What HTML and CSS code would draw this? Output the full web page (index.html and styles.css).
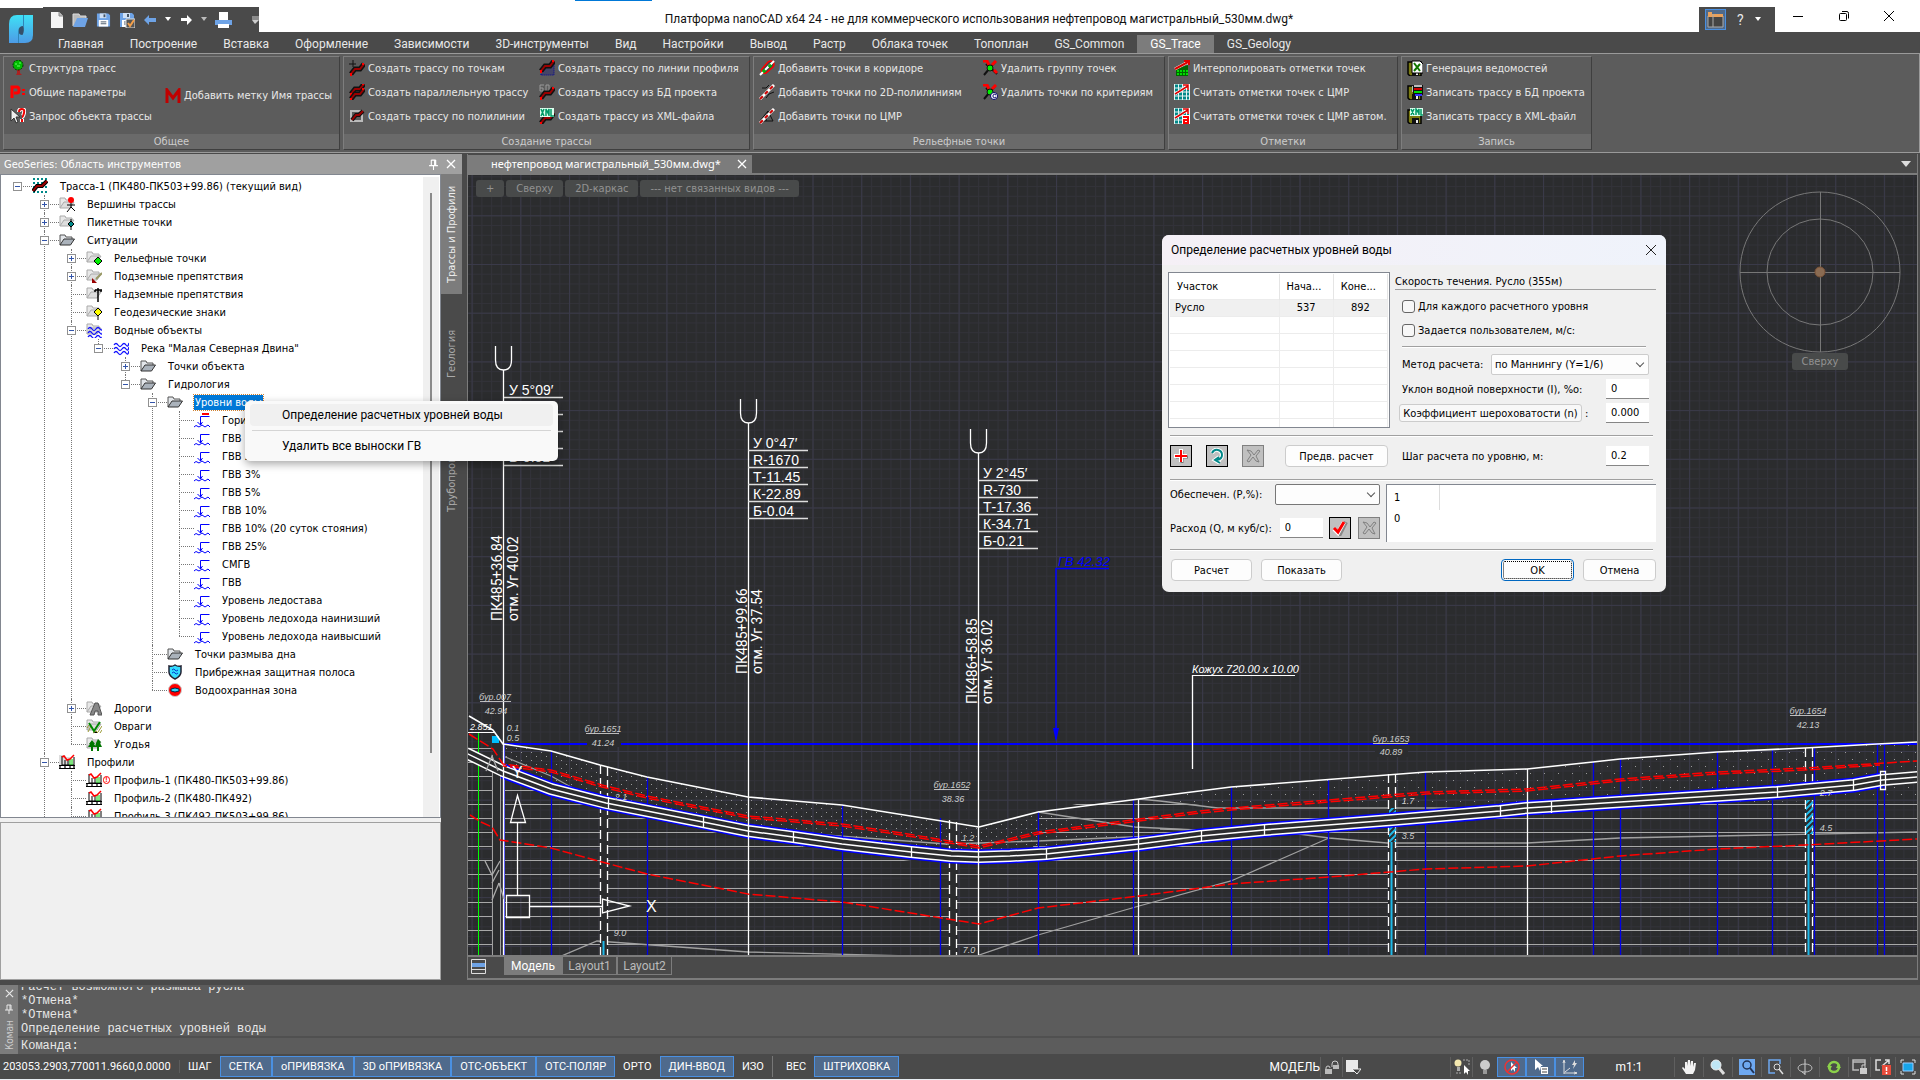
FILE: index.html
```
<!DOCTYPE html>
<html lang="ru">
<head>
    <meta charset="UTF-8">
    <meta name="viewport" content="width=device-width, initial-scale=1.0">
    <title>Платформа nanoCAD x64 24</title>
    <link rel="stylesheet" href="styles.css">
</head>
<body>
    <!-- Icons -->
    <svg class="defs" aria-hidden="true">
        <symbol id="i-folder" viewBox="0 0 16 16"><path d="M1 13V3h5l1 2h6v2" fill="#e3e6ea" stroke="#555" /><path d="M1 13l4-6h10.500l-4 6z" fill="#aab2bb" stroke="#333" /></symbol>
        <symbol id="i-gfolder" viewBox="0 0 16 16"><path d="M1 12V2h5l1 2h6v2" fill="#e8e8e8" stroke="#aaa" /><path d="M1 12l4-6h10l-4 6z" fill="#ddd" stroke="#aaa" /></symbol>
        <symbol id="i-route" viewBox="0 0 16 16"><path d="M1 1h15M1 5h15M1 9h15M1 14h15" stroke="#088" stroke-width="2" stroke-dasharray="2 2" /><path d="M1 13l4-5h5l5-5" stroke="#000" stroke-width="4" fill="none" /><path d="M1 13l4-5h5l5-5" stroke="#900" stroke-width="2" fill="none" /></symbol>
        <symbol id="i-vertex" viewBox="0 0 16 16"><use href="#i-gfolder" /><path d="M12 6v5l-4 5M12 11l4 4M8 9h8" stroke="#000" fill="none" /><circle cx="12" cy="4" r="3" fill="red" /></symbol>
        <symbol id="i-picket" viewBox="0 0 16 16"><use href="#i-gfolder" /><path d="M12 5v11" stroke="#000" /><path d="M12 7l3 3-3 3-3-3z" fill="#088" stroke="#000" /></symbol>
        <symbol id="i-relief" viewBox="0 0 16 16"><use href="#i-gfolder" /><path d="M12 7l4 4-4 4-4-4z" fill="#0e0" stroke="#000" /></symbol>
        <symbol id="i-under" viewBox="0 0 16 16"><use href="#i-gfolder" /><path d="M16 5l-6 6" stroke="#996" stroke-width="2" /><path d="M6 10v5h5z" fill="#900" /></symbol>
        <symbol id="i-over" viewBox="0 0 16 16"><use href="#i-gfolder" /><path d="M12 2v14M9 4h7M9 4v2M15 4v2" stroke="#000" stroke-width="1.500" /></symbol>
        <symbol id="i-geodesic" viewBox="0 0 16 16"><use href="#i-gfolder" /><path d="M12 10v6" stroke="#000" /><path d="M12 4l4 4-4 4-4-4z" fill="#ff0" stroke="#000" /></symbol>
        <symbol id="i-water" viewBox="0 0 16 16"><path d="M1 5q2-3 4 0t4 0 4 0 3-2M1 9q2-3 4 0t4 0 4 0 3-2M1 13q2-3 4 0t4 0 4 0 3-2" fill="none" stroke="#11f" stroke-width="1.300" /></symbol>
        <symbol id="i-waters" viewBox="0 0 16 16"><use href="#i-gfolder" /><use href="#i-water" x="1" y="2" /></symbol>
        <symbol id="i-level" viewBox="0 0 16 16"><path d="M15.500 4.500h-9V13M3.500 10l3 3 2-3" fill="none" stroke="#00f" /><path d="M0 15l2-1.500L5 15l3-2 3 2 3-2 2 2" fill="none" stroke="#00f" /></symbol>
        <symbol id="i-level-red" viewBox="0 0 16 16"><use href="#i-level" /><path d="M8 2h7" stroke="red" stroke-width="2" /></symbol>
        <symbol id="i-shield" viewBox="0 0 16 16"><path d="M2 2q3 1 6-1 3 2 6 1v6q0 4-6 7-6-3-6-7z" fill="#3df" stroke="#223" stroke-width="1.500" /><path d="M5 6q2-2 3 0t3 0M5 9q2-2 3 0t3 0" stroke="#03c" fill="none" /></symbol>
        <symbol id="i-zone" viewBox="0 0 16 16"><circle cx="8" cy="8" r="6.500" fill="red" stroke="#ccc" /><path d="M4 7q4-2 8 0v2q-4 2-8 0z" fill="#3df" stroke="#024" /></symbol>
        <symbol id="i-road" viewBox="0 0 16 16"><use href="#i-gfolder" /><path d="M4 15L9 3h3l4 12h-4v-4H9l-1 4z" fill="#888" stroke="#555" /></symbol>
        <symbol id="i-ravine" viewBox="0 0 16 16"><use href="#i-gfolder" /><path d="M2 14l3-6M12 14l4-6M7 15l3-2 2 2M1 10l2-3M14 15l2-3" stroke="#993" /><path d="M3 5l5 8 6-9" fill="none" stroke="#080" stroke-width="2" /></symbol>
        <symbol id="i-trees" viewBox="0 0 16 16"><use href="#i-gfolder" /><path d="M6 4l3 4H8l2 3H7v4H5v-4H2l2-3H3zM12 3l3 3-1 1 2 4h-3v4h-2v-4H9l1-4z" fill="#070" /></symbol>
        <symbol id="i-profile" viewBox="0 0 16 16"><path d="M3 2v9h12V3M6 6v5M9 6v5" fill="none" stroke="#000" /><path d="M11 5v6M13 5v6" stroke="#0c0" /><path d="M0 11.500h16M0 14.500h16M1 12v3M6 12v3M11 12v3M15 12v3" stroke="#000" stroke-width="1.200" /><path d="M3 3l2-1 3 4 3-1 4-4" fill="none" stroke="red" stroke-width="1.500" /></symbol>
        <symbol id="i-profiles" viewBox="0 0 16 16"><path d="M0 1h6l1 2h4v9H0z" fill="#ddd" /><use href="#i-profile" /></symbol>
        <symbol id="i-tree" viewBox="0 0 16 16"><path d="M7 8h3v5l2 2H6l1-2z" fill="#a22" /><circle cx="8" cy="5" r="5" fill="#0b0" stroke="#030" stroke-dasharray="2 1" /><path d="M5 4h2M9 3h2M7 6h3" stroke="#6f6" /></symbol>
        <symbol id="i-params" viewBox="0 0 16 16"><path d="M2 14V3h5q2 0 2 3T7 9H4" fill="none" stroke="red" stroke-width="3" /><path d="M12 5h3v2h-3zM12 9h3v2h-3z" fill="red" /></symbol>
        <symbol id="i-query" viewBox="0 0 16 16"><path d="M1 1v12l3-3 2 5 2-1-2-5h4z" fill="#eee" stroke="#333" /><path d="M9 4q0-3 3-3t2 4-2 4M12 11v3" fill="none" stroke="#fff" stroke-width="4" /><path d="M9 4q0-3 3-3t2 4-2 4M12 11v3" fill="none" stroke="#e00" stroke-width="2" /></symbol>
        <symbol id="i-m" viewBox="0 0 16 16"><path d="M2 15V2l6 8 6-8v13" fill="none" stroke="#c00000" stroke-width="3" /></symbol>
        <symbol id="i-r" viewBox="0 0 16 16"><path d="M2 13l4-5h5l4-5" stroke="#111" stroke-width="5" fill="none" /><path d="M2 13l4-5h5l4-5" stroke="#900" stroke-width="2" fill="none" /><path d="M1 12h2v3H1zM13 2h2v2h-2z" fill="red" /></symbol>
        <symbol id="i-r-pt" viewBox="0 0 16 16"><use href="#i-r" y="1" /><path d="M4 0v7M0 4h7" stroke="#111" /></symbol>
        <symbol id="i-r-par" viewBox="0 0 16 16"><use href="#i-r" y="-3" /><use href="#i-r" y="2" /></symbol>
        <symbol id="i-r-pl" viewBox="0 0 16 16"><path d="M2 3h11v10H2z" fill="none" stroke="#bbb" stroke-width="2" /><path d="M3 12l4-5h3l4-4" stroke="#111" stroke-width="4" fill="none" /><path d="M3 12l4-5h3l4-4" stroke="#900" stroke-width="2" fill="none" /></symbol>
        <symbol id="i-r-line" viewBox="0 0 16 16"><path d="M2 15V9l5-4 8-2v12z" fill="#446" stroke="#009" stroke-dasharray="1 1" /><use href="#i-r" y="-2" /></symbol>
        <symbol id="i-r-db" viewBox="0 0 16 16"><path d="M1 1h4M1 1v6h3V4H1M7 1h3v5M6 7h5M7 1v6" stroke="#999" fill="none" /><use href="#i-r" y="1" /></symbol>
        <symbol id="i-r-xml" viewBox="0 0 16 16"><use href="#i-r" y="2" /><path d="M1 0h14v9H1z" fill="#dfe" /><path d="M2 1l3 7M5 1L2 8M7 8V1l2 4 1-4v7M12 1v7h3" stroke="#096" fill="none" stroke-width="1.500" /></symbol>
        <symbol id="i-pen" viewBox="0 0 16 16"><path d="M1 15L15 1" stroke="#fff" stroke-width="3" /><path d="M1 15L15 1" stroke="#c00" stroke-dasharray="4 3" stroke-width="2" /></symbol>
        <symbol id="i-p-cor" viewBox="0 0 16 16"><path d="M3 9L9 2q3-2 5 0t0 5L7 13q-3 1-4-1t0-3z" fill="#444" stroke="red" stroke-width="1.500" /><path d="M1 15L15 1" stroke="#fff" stroke-width="2" /><path d="M3 11h4M5 9v4M9 6h4M11 4v4" stroke="#0a0" stroke-width="1.500" /></symbol>
        <symbol id="i-p-2d" viewBox="0 0 16 16"><path d="M3 4h4l3-3M7 14l3-4 5-2" stroke="#111" fill="none" /><use href="#i-pen" /></symbol>
        <symbol id="i-p-cmr" viewBox="0 0 16 16"><path d="M1 13h13L9 3zM9 3l-2 10" stroke="#111" fill="none" /><use href="#i-pen" /></symbol>
        <symbol id="i-p-del" viewBox="0 0 16 16"><path d="M2 15L13 2M4 4l11 10" stroke="#111" stroke-width="2" /><path d="M1 1h4l2 4M14 1l-4 4M12 10l3 3" stroke="red" stroke-width="3" fill="none" /><circle cx="8" cy="8" r="3" fill="#0e0" stroke="#111" /></symbol>
        <symbol id="i-p-crit" viewBox="0 0 16 16"><use href="#i-p-del" /><circle cx="12" cy="12" r="3.500" fill="#fff" stroke="#006" /><path d="M14 11q-3-2-3 1t3 1" stroke="#006" fill="none" /></symbol>
        <symbol id="i-e-int" viewBox="0 0 16 16"><path d="M2 16V9l12-4v11z" fill="#060" /><path d="M3 11h11M3 14h11" stroke="#0d0" stroke-width="2" stroke-dasharray="2 1" /><path d="M1 9L14 2M10 1h5v4" stroke="#fff" stroke-width="3" fill="none" /><path d="M1 9L14 2M10 1h5v4" stroke="#d00" stroke-width="2" fill="none" /></symbol>
        <symbol id="i-e-cmr" viewBox="0 0 16 16"><path d="M0 0h16v16H0z" fill="#e6f4f4" /><path d="M1 2h14M1 6h14M1 10h14M1 14h14" stroke="#088" stroke-width="3" stroke-dasharray="3 1" /><path d="M1 10L14 2M9 1h5v5" stroke="#fff" stroke-width="3" fill="none" /><path d="M1 10L14 2M9 1h5v5" stroke="#d00" stroke-width="1.500" fill="none" /></symbol>
        <symbol id="i-e-auto" viewBox="0 0 16 16"><use href="#i-e-cmr" /><path d="M8 7h8v9H8z" fill="#fff" /><path d="M9 9h5v6h-4v-3h4" fill="none" stroke="red" stroke-width="2" /></symbol>
        <symbol id="i-disk" viewBox="0 0 16 16"><path d="M1 2h13v14H3l-2-2z" fill="#7a7a10" stroke="#000" stroke-width="1.500" /><path d="M5 2h6v6H5z" fill="#bbb" /><path d="M5 10h7v6H5z" fill="#111" /><path d="M9 12h2v3H9z" fill="#eee" /></symbol>
        <symbol id="i-w-xls" viewBox="0 0 16 16"><use href="#i-disk" /><path d="M5 1h8l3 3v9H5z" fill="#fff" stroke="#000" /><path d="M7 3l6 8M13 4l-6 7" stroke="#170" stroke-width="2" /></symbol>
        <symbol id="i-w-db" viewBox="0 0 16 16"><use href="#i-disk" /><path d="M6 1h10v10H6z" fill="#111" /><path d="M7 2h8" stroke="#bbb" stroke-width="2" /><path d="M7 5h8" stroke="#c00" stroke-width="2" /><path d="M7 8h8" stroke="#0d0" stroke-width="2" /><path d="M8 11h7" stroke="#33f" stroke-width="2" /></symbol>
        <symbol id="i-w-xml" viewBox="0 0 16 16"><use href="#i-disk" /><path d="M3 0h13v8H3z" fill="#dfe" /><path d="M4 1l3 6M7 1L4 7M9 7V1l2 3 1-3v6M14 1v6h2" stroke="#096" fill="none" stroke-width="1.500" /></symbol>
        <symbol id="i-x" viewBox="0 0 10 10"><path d="M1 1l8 8M9 1L1 9" stroke="currentColor" stroke-width="1.300" /></symbol>
        <symbol id="i-pin" viewBox="0 0 10 10"><path d="M3 1v5M7 1v5M3 1h4M1 6h8M5 6v4M6 1v5" stroke="currentColor" fill="none" /></symbol>
        <symbol id="i-floppy" viewBox="0 0 16 16"><path d="M1 1h12l2 2v12H1z" fill="#6ea3e6" /><path d="M4 1h7v5H4z" fill="#cfe0f5" /><path d="M8 2h2v3H8z" fill="#456" /><path d="M3 8h10v7H3z" fill="#fff" /><path d="M5 10h6M5 12h6" stroke="#456" /></symbol>
        <symbol id="i-cross" viewBox="0 0 16 16"><path d="M2 2l4 1 3 4 4-5 2 1-4 5 3 6-3-1-3-4-4 5-2-1 4-6z" fill="none" stroke="#808080" /></symbol>
        <symbol id="i-glass" viewBox="0 0 16 16"><path d="M9 9l5 6" stroke="#ddd" stroke-width="3" /><circle cx="6" cy="6" r="5" fill="#bfe6f5" stroke="#eee" /></symbol>
    </svg>

    <!-- Title and menu -->
    <header class="header">
        <div class="logo">
            <svg viewBox="0 0 26 30" width="26" height="30"><defs><linearGradient id="lg" x2="0" y2="1"><stop offset="0" stop-color="#3fe0f5" /><stop offset="1" stop-color="#4d9be6" /></linearGradient></defs><path d="M9 1h16v20q0 8-8 8H1V10Q1 1 9 1z" fill="url(#lg)" /><path d="M15.500 12q-5 0-5 5 0 4 4 4 2-3 1-9z" fill="#35506a" /><path d="M15.500 1v12M10.500 17v12" stroke="#2f86b8" /></svg>
        </div>
        <div class="titlebar">
            <div class="quick">
                <button aria-label="Новый"><svg width="14" height="16" viewBox="0 0 14 16"><path d="M1 0h8l4 4v12H1z" fill="#f4f4f4" /><path d="M9 0v4h4" fill="#bbb" stroke="#888" /></svg></button>
                <button aria-label="Открыть"><svg width="16" height="16" viewBox="0 0 16 16"><path d="M1 14V2h6l1 2h6v3" fill="#bbb" stroke="#ddd" /><path d="M1 15l4-9h11l-3 9z" fill="#6ea3e6" /></svg></button>
                <button aria-label="Сохранить"><svg width="15" height="16"><use href="#i-floppy" /></svg></button>
                <button aria-label="Сохранить как"><svg width="16" height="16" viewBox="0 0 16 16"><use href="#i-floppy" /><path d="M7 7h9v9H7z" fill="#555" stroke="#ddd" /><path d="M9 11l2 3 4-6" stroke="#f5a04a" stroke-width="2" fill="none" /></svg></button>
                <button aria-label="Отменить"><svg width="14" height="14" viewBox="0 0 14 14"><path d="M1 7l5-5v3h7v4H6v3z" fill="#6ea3e6" /></svg></button>
                <button aria-label="Список отмен"><svg width="6" height="5"><path d="M0 0h6L3 4z" fill="#fff" /></svg></button>
                <button aria-label="Вернуть"><svg width="14" height="14" viewBox="0 0 14 14"><path d="M13 7L8 2v3H2v3h6v4z" fill="#fff" /></svg></button>
                <button aria-label="Список возвратов"><svg width="6" height="5"><path d="M0 0h6L3 4z" fill="#bbb" /></svg></button>
                <button aria-label="Печать"><svg width="17" height="16" viewBox="0 0 17 16"><path d="M4 0h9v9H4z" fill="#fff" /><path d="M0 8h17v5H0z" fill="#6ea3e6" /><path d="M3 12h11v4H3z" fill="#fff" /></svg></button>
                <button class="more" aria-label="Настроить"><svg width="7" height="8"><path d="M0 1h7M0 3h7" stroke="#ccc" /><path d="M0 4h7L3 8z" fill="#ccc" /></svg></button>
            </div>
            <div class="title">Платформа nanoCAD x64 24 - не для коммерческого использования нефтепровод магистральный_530мм.dwg*</div>
            <div class="help">
                <button class="layout-btn" aria-label="Интерфейс"><svg width="17" height="17" viewBox="0 0 17 17"><path d="M1 5h15v11H1z" fill="#444" stroke="#aaa" /><path d="M1 1h4v2h11v3H1z" fill="#e8a15c" /><path d="M6 3v13" stroke="#aaa" /></svg></button>
                <button class="question">?</button>
                <svg width="6" height="5"><path d="M0 0h6L3 4z" fill="#fff" /></svg>
            </div>
            <div class="window-buttons">
                <button aria-label="Свернуть"><svg width="12" height="12"><path d="M1 6.500h10" stroke="#000" /></svg></button>
                <button aria-label="Развернуть"><svg width="12" height="12"><rect x="1.500" y="3.500" width="7" height="7" rx="1" fill="none" stroke="#000" /><path d="M4 1.500h5q1.500 0 1.500 2v5" fill="none" stroke="#000" /></svg></button>
                <button aria-label="Закрыть"><svg width="12" height="12"><path d="M1 1l10 10M11 1L1 11" stroke="#000" /></svg></button>
            </div>
        </div>
        <nav class="menu">
            <button>Главная</button><button>Построение</button><button>Вставка</button><button>Оформление</button><button>Зависимости</button><button>3D-инструменты</button><button>Вид</button><button>Настройки</button><button>Вывод</button><button>Растр</button><button>Облака точек</button><button>Топоплан</button><button>GS_Common</button><button class="active">GS_Trace</button><button>GS_Geology</button>
        </nav>
    </header>

    <!-- Ribbon -->
    <section class="ribbon">
        <div class="group g-common">
            <div class="tools">
                <div class="col">
                    <button><svg><use href="#i-tree" /></svg>Структура трасс</button>
                    <button><svg><use href="#i-params" /></svg>Общие параметры</button>
                    <button><svg><use href="#i-query" /></svg>Запрос объекта трассы</button>
                </div>
                <div class="col mid">
                    <button><svg><use href="#i-m" /></svg>Добавить метку Имя трассы</button>
                </div>
            </div>
            <div class="caption">Общее</div>
        </div>
        <div class="group g-create">
            <div class="tools">
                <div class="col">
                    <button><svg><use href="#i-r-pt" /></svg>Создать трассу по точкам</button>
                    <button><svg><use href="#i-r-par" /></svg>Создать параллельную трассу</button>
                    <button><svg><use href="#i-r-pl" /></svg>Создать трассу по полилинии</button>
                </div>
                <div class="col">
                    <button><svg><use href="#i-r-line" /></svg>Создать трассу по линии профиля</button>
                    <button><svg><use href="#i-r-db" /></svg>Создать трассу из БД проекта</button>
                    <button><svg><use href="#i-r-xml" /></svg>Создать трассу из XML-файла</button>
                </div>
            </div>
            <div class="caption">Создание трассы</div>
        </div>
        <div class="group g-relief">
            <div class="tools">
                <div class="col">
                    <button><svg><use href="#i-p-cor" /></svg>Добавить точки в коридоре</button>
                    <button><svg><use href="#i-p-2d" /></svg>Добавить точки по 2D-полилиниям</button>
                    <button><svg><use href="#i-p-cmr" /></svg>Добавить точки по ЦМР</button>
                </div>
                <div class="col">
                    <button><svg><use href="#i-p-del" /></svg>Удалить группу точек</button>
                    <button><svg><use href="#i-p-crit" /></svg>Удалить точки по критериям</button>
                </div>
            </div>
            <div class="caption">Рельефные точки</div>
        </div>
        <div class="group g-marks">
            <div class="tools">
                <div class="col">
                    <button><svg><use href="#i-e-int" /></svg>Интерполировать отметки точек</button>
                    <button><svg><use href="#i-e-cmr" /></svg>Считать отметки точек с ЦМР</button>
                    <button><svg><use href="#i-e-auto" /></svg>Считать отметки точек с ЦМР автом.</button>
                </div>
            </div>
            <div class="caption">Отметки</div>
        </div>
        <div class="group g-write">
            <div class="tools">
                <div class="col">
                    <button><svg><use href="#i-w-xls" /></svg>Генерация ведомостей</button>
                    <button><svg><use href="#i-w-db" /></svg>Записать трассу в БД проекта</button>
                    <button><svg><use href="#i-w-xml" /></svg>Записать трассу в XML-файл</button>
                </div>
            </div>
            <div class="caption">Запись</div>
        </div>
    </section>

    <main class="main">
        <!-- Tool panel -->
        <aside class="panel">
            <div class="panel-title"><span>GeoSeries: Область инструментов</span><svg width="11" height="11"><use href="#i-pin" /></svg><svg width="10" height="10"><use href="#i-x" /></svg></div>
            <div class="panel-body">
                <div class="tree-box">
                    <ul class="tree">
                        <li><div class="row"><b class="exp"></b><svg><use href="#i-route" /></svg><span>Трасса-1 (ПК480-ПК503+99.86) (текущий вид)</span></div>
                            <ul>
                                <li><div class="row"><b class="exp plus"></b><svg><use href="#i-vertex" /></svg><span>Вершины трассы</span></div></li>
                                <li><div class="row"><b class="exp plus"></b><svg><use href="#i-picket" /></svg><span>Пикетные точки</span></div></li>
                                <li><div class="row"><b class="exp"></b><svg><use href="#i-folder" /></svg><span>Ситуации</span></div>
                                    <ul>
                                        <li><div class="row"><b class="exp plus"></b><svg><use href="#i-relief" /></svg><span>Рельефные точки</span></div></li>
                                        <li><div class="row"><b class="exp plus"></b><svg><use href="#i-under" /></svg><span>Подземные препятствия</span></div></li>
                                        <li><div class="row"><svg><use href="#i-over" /></svg><span>Надземные препятствия</span></div></li>
                                        <li><div class="row"><svg><use href="#i-geodesic" /></svg><span>Геодезические знаки</span></div></li>
                                        <li><div class="row"><b class="exp"></b><svg><use href="#i-waters" /></svg><span>Водные объекты</span></div>
                                            <ul>
                                                <li><div class="row"><b class="exp"></b><svg><use href="#i-water" /></svg><span>Река "Малая Северная Двина"</span></div>
                                                    <ul>
                                                        <li><div class="row"><b class="exp plus"></b><svg><use href="#i-folder" /></svg><span>Точки объекта</span></div></li>
                                                        <li><div class="row"><b class="exp"></b><svg><use href="#i-folder" /></svg><span>Гидрология</span></div>
                                                            <ul>
                                                                <li><div class="row"><b class="exp"></b><svg><use href="#i-folder" /></svg><span class="selected">Уровни воды</span></div>
                                                                    <ul>
                                                                        <li><div class="row"><svg><use href="#i-level-red" /></svg><span>Горизонт</span></div></li>
                                                                        <li><div class="row"><svg><use href="#i-level" /></svg><span>ГВВ 1%</span></div></li>
                                                                        <li><div class="row"><svg><use href="#i-level" /></svg><span>ГВВ 2%</span></div></li>
                                                                        <li><div class="row"><svg><use href="#i-level" /></svg><span>ГВВ 3%</span></div></li>
                                                                        <li><div class="row"><svg><use href="#i-level" /></svg><span>ГВВ 5%</span></div></li>
                                                                        <li><div class="row"><svg><use href="#i-level" /></svg><span>ГВВ 10%</span></div></li>
                                                                        <li><div class="row"><svg><use href="#i-level" /></svg><span>ГВВ 10% (20 суток стояния)</span></div></li>
                                                                        <li><div class="row"><svg><use href="#i-level" /></svg><span>ГВВ 25%</span></div></li>
                                                                        <li><div class="row"><svg><use href="#i-level" /></svg><span>СМГВ</span></div></li>
                                                                        <li><div class="row"><svg><use href="#i-level" /></svg><span>ГВВ</span></div></li>
                                                                        <li><div class="row"><svg><use href="#i-level" /></svg><span>Уровень ледостава</span></div></li>
                                                                        <li><div class="row"><svg><use href="#i-level" /></svg><span>Уровень ледохода наинизший</span></div></li>
                                                                        <li><div class="row"><svg><use href="#i-level" /></svg><span>Уровень ледохода наивысший</span></div></li>
                                                                    </ul>
                                                                </li>
                                                                <li><div class="row"><svg><use href="#i-folder" /></svg><span>Точки размыва дна</span></div></li>
                                                                <li><div class="row"><svg><use href="#i-shield" /></svg><span>Прибрежная защитная полоса</span></div></li>
                                                                <li><div class="row"><svg><use href="#i-zone" /></svg><span>Водоохранная зона</span></div></li>
                                                            </ul>
                                                        </li>
                                                    </ul>
                                                </li>
                                            </ul>
                                        </li>
                                        <li><div class="row"><b class="exp plus"></b><svg><use href="#i-road" /></svg><span>Дороги</span></div></li>
                                        <li><div class="row"><svg><use href="#i-ravine" /></svg><span>Овраги</span></div></li>
                                        <li><div class="row"><svg><use href="#i-trees" /></svg><span>Угодья</span></div></li>
                                    </ul>
                                </li>
                                <li class="open-end"><div class="row"><b class="exp"></b><svg><use href="#i-profiles" /></svg><span>Профили</span></div>
                                    <ul>
                                        <li><div class="row warn"><svg><use href="#i-profile" /></svg><i>!</i><span>Профиль-1 (ПК480-ПК503+99.86)</span></div></li>
                                        <li><div class="row"><svg><use href="#i-profile" /></svg><span>Профиль-2 (ПК480-ПК492)</span></div></li>
                                        <li class="open-end"><div class="row"><svg><use href="#i-profile" /></svg><span>Профиль-3 (ПК492-ПК503+99.86)</span></div></li>
                                    </ul>
                                </li>
                            </ul>
                        </li>
                    </ul>
                    <div class="scroll"><div class="thumb"></div></div>
                </div>
                <div class="preview"></div>
            </div>
            <div class="side-tabs">
                <button class="active">Трассы и Профили</button>
                <button>Геология</button>
                <button>Трубопроводы</button>
            </div>
            <div class="context-menu" role="menu">
                <button class="hover" role="menuitem">Определение расчетных уровней воды</button>
                <hr>
                <button role="menuitem">Удалить все выноски ГВ</button>
            </div>
        </aside>

        <!-- Document -->
        <section class="document">
            <div class="doc-tabs">
                <button>нефтепровод магистральный_530мм.dwg*<svg width="10" height="10"><use href="#i-x" /></svg></button>
                <svg class="list" width="10" height="6"><path d="M0 0h10L5 6z" fill="#ddd" /></svg>
            </div>
            <div class="canvas">
                <svg class="drawing" viewBox="468 176 1449 790" preserveAspectRatio="xMinYMin slice">
                    <defs>
                        <pattern id="minor" x="520.300" y="216.300" width="9.740" height="9.740" patternUnits="userSpaceOnUse"><path d="M.5 0v9.740M0 .5h9.740" stroke="#323239" /></pattern>
                        <pattern id="major" x="520.300" y="216.300" width="48.700" height="48.700" patternUnits="userSpaceOnUse"><path d="M.5 0v48.700M0 .5h48.700" stroke="#3a3a49" /></pattern>
                        <pattern id="dense" width="10" height="8" patternUnits="userSpaceOnUse"><path d="M1 1h1v1H1zM6 5h1v1H6z" fill="#999" /></pattern>
                        <pattern id="sparse" width="14" height="14" x="3" y="3" patternUnits="userSpaceOnUse"><path d="M1 1h1v1H1zM8 8h1v1H8z" fill="#999" /></pattern>
                        <pattern id="dots" width="14" height="14" y="0" patternUnits="userSpaceOnUse"><path d="M4 7h1v1H4z" fill="#999" /></pattern>
                        <pattern id="lines" y="777" width="20" height="14" patternUnits="userSpaceOnUse"><path d="M0 .5h20" stroke="#a8a8a8" /></pattern>
                        <pattern id="hatch" width="6" height="6" patternUnits="userSpaceOnUse"><path d="M0 6l6-6M-1 1l2-2M5 7l2-2" stroke="#1fb8e8" stroke-width="2" /></pattern>
                    </defs>
                    <rect x="460" y="170" width="1470" height="800" fill="url(#minor)" />
                    <rect x="460" y="170" width="1470" height="800" fill="url(#major)" />

                    <!-- Soil -->
                    <polygon fill="url(#dense)" points="503,745 551,752 600,766 647,778 748,798 842,806 979,828 1038,813 1100,828 1138,845 1046,848 979,851 911,847 793,832 703,817 606,798 551,782 503,766" />
                    <polygon fill="url(#sparse)" points="1038,813 1139,800 1231,788 1426,773 1527,770 1620,760 1805,749 1917,743 1917,800 1527,808 1231,808 1139,800" />
                    <polygon fill="url(#dots)" points="504,780 606,812 748,840 911,862 979,866 1046,862 1200,845 1328,838 1231,882 1038,936 979,958 504,958" />
                    <polygon fill="url(#lines)" points="503,777 551,796 606,812 748,840 911,862 979,866 1025,860 1038,840 1038,813 1077,805 1139,800 1231,809 1527,809 1700,808 1700,800 1917,800 1917,958 503,958" />
                    <path d="M468 749.500h24M468 763.500h24M468 777.500h24M468 791.500h24M468 805.500h24M468 819.500h24M468 833.500h24M468 847.500h24M468 861.500h24M468 875.500h24M468 889.500h24M468 903.500h24M468 917.500h24M468 931.500h24M468 945.500h24" stroke="#a8a8a8" />
                    <g fill="none" stroke="#a0a0a0" stroke-width="1.300">
                        <polyline points="503,757 551,777 602,805 660,820 748,830 946,845 979,844 1038,842 1200,835" />
                        <polyline points="1038,813 1135,828 1196,831" />
                        <polyline points="1139,800 1160,802 1218,809 1500,809" />
                        <polyline points="559,958 597,942 748,953 913,957" />
                        <polyline points="979,956 1038,936 1139,907 1231,882 1329,839" />
                        <polyline points="1160,830 1291,834 1329,839 1387,844 1527,844 1620,839 1717,837 1917,833" />
                    </g>

                    <!-- Ordinates -->
                    <path d="M551.500 752v206M647.500 778v180M842.500 806v152M940.500 819v139M1038.500 813v145M1133.500 801v157M1231.500 788v170M1328.500 780v178M1425.500 773v185M1593.500 763v195M1620.500 760v198M1717.500 753v205M1772.500 750v208M1814.500 748v210M1877.500 745v213M1884.500 745v213" stroke="#0000e6" stroke-width="1.300" />
                    <path d="M504.500 745v213" stroke="#4a4aff" />
                    <path d="M478.500 733v225" stroke="#0f0" />

                    <!-- Boreholes -->
                    <path d="M493 740h8v218h-8zM600 766h8v192h-8zM949 821h8v137h-8zM1388 775h8v183h-8zM1805 749h8v209h-8z" fill="#2b2c2e" />
                    <path d="M492.500 756v202M500.500 772v186" stroke="#a0a0a0" />
                    <path d="M600.500 766v192M607.500 768v190M949.500 821v137M956.500 823v135M1388.500 775v183M1395.500 775v183M1805.500 749v209M1812.500 749v209" stroke="#fff" stroke-width="1.300" stroke-dasharray="9 4" />
                    <path d="M1389 809h7v34h-7zM1806 801h7v34h-7z" fill="url(#hatch)" />
                    <path d="M603.500 942v16M1391.500 843v115M1808.500 835v123" stroke="#1fb8e8" stroke-width="2" />
                    <path d="M492 737h7v7h-7z" fill="#00bfff" />

                    <!-- Pipe -->
                    <polyline fill="none" stroke="#0000ff" stroke-width="15" points="503,772 551,790 606,804 647,812 703,823 748,832 793,838 842,845 911,853 951,857 979,858 1010,857 1046,855 1139,845 1201,837 1264,831 1392,821 1500,812 1527,809 1620,803 1777,793 1810,790 1854,786 1882,781" />
                    <g fill="none">
                        <polyline stroke="#fff" stroke-width="12" points="466,754 503,772 551,790 606,804 647,812 703,823 748,832 793,838 842,845 911,853 951,857 979,858 1010,857 1046,855 1139,845 1201,837 1264,831 1392,821 1500,812 1527,809 1620,803 1777,793 1810,790 1854,786 1882,781 1918,778" />
                        <polyline stroke="#2b2c2e" stroke-width="9" points="466,754 503,772 551,790 606,804 647,812 703,823 748,832 793,838 842,845 911,853 951,857 979,858 1010,857 1046,855 1139,845 1201,837 1264,831 1392,821 1500,812 1527,809 1620,803 1777,793 1810,790 1854,786 1882,781 1918,778" />
                        <polyline stroke="#fff" stroke-width="1.500" points="466,754 503,772 551,790 606,804 647,812 703,823 748,832 793,838 842,845 911,853 951,857 979,858 1010,857 1046,855 1139,845 1201,837 1264,831 1392,821 1500,812 1527,809 1620,803 1777,793 1810,790 1854,786 1882,781 1918,778" />
                    </g>
                    <path d="M608.500 798v12M703.500 817v12M793.500 832v12M911.500 847v12M1046.500 849v12M1201.500 831v12M1264.500 825v12M1500.500 806v12M1551.500 802v12M1777.500 787v12M1853.500 780v12M1880.500 772.500h5v18h-5z" fill="none" stroke="#fff" stroke-width="1.300" />

                    <!-- Water level -->
                    <path d="M503 745h1414" stroke="#00f" stroke-width="2" />
                    <path d="M1109 569.500h-53V740" stroke="#00f" fill="none" stroke-width="1.500" />
                    <path d="M1053 729h6l-3 14z" fill="#00f" />

                    <!-- Ground -->
                    <polyline fill="none" stroke="#fff" stroke-width="1.600" points="469,717 493,731 503,745 551,752 600,766 647,778 748,798 842,806 979,828 1038,813 1139,800 1160,797 1231,788 1426,773 1527,770 1593,763 1620,760 1717,753 1805,749 1877,745 1917,743" />
                    <path d="M503.500 371v587M748.500 424v534M978.500 454v504M1138.500 800v158M1527.500 770v188M1192.500 676v94" stroke="#fff" stroke-width="1.300" />
                    <path d="M495.500 347v14q0 10 8 10t8-10v-14M740.500 400v14q0 10 8 10t8-10v-14M970.500 430v14q0 10 8 10t8-10v-14" fill="none" stroke="#fff" stroke-width="1.300" />

                    <!-- Excavation -->
                    <g fill="none" stroke="#f00" stroke-width="1.500" stroke-dasharray="10 3">
                        <polyline points="469,735 493,750 503,765 551,771 602,786 647,797 748,817 842,825 908,835 979,847 1038,833 1139,820 1200,812 1231,809 1426,793 1527,790 1620,780 1717,773 1805,769 1917,762" />
                        <polyline stroke-dashoffset="6" points="503,767 551,773 602,788 647,799 748,819 842,827 908,837 979,849 1038,835 1139,822 1200,814 1231,811 1426,795 1527,792 1620,782 1717,775 1805,771 1880,766" />
                        <polyline points="470,816 481,823 492,828 500,841 551,849 602,863 647,875 748,895 842,903 979,925 1038,909 1139,897 1231,885 1329,878 1426,870 1527,867 1620,857 1717,850 1805,846 1917,840" />
                    </g>

                    <!-- UCS -->
                    <g fill="none" stroke="#fff" stroke-width="1.300">
                        <path d="M506.500 896.500h23v22h-23zM517.500 896v-73M510.500 823.500h15l-8-27zM529 907.500h73M602.500 900v14l27-7z" />
                        <path stroke="#aaa" d="M485 862l7 14 8-14M492 884l7-13M499 884l-7 17M499 884l5 16M486 772l6-15 6 15" />
                    </g>
                    <text class="ucs" x="512" y="779">Y</text><text class="ucs" x="646" y="913">X</text>

                    <!-- Turn angle labels -->
                    <path d="M504 398.500h59M504 415.500h59M504 432.500h59M504 449.500h59M504 466.500h59M748 451.500h60M748 468.500h60M748 485.500h60M748 502.500h60M748 519.500h60M979 481.500h59M979 498.500h59M979 515.500h59M979 532.500h59M979 549.500h59" stroke="#ddd" stroke-width="1.500" />
                    <g class="note">
                        <text x="509" y="396">У 5°09′</text><text x="509" y="463">Б-0.01</text>
                        <text x="753" y="449">У 0°47′</text><text x="753" y="466">R-1670</text><text x="753" y="483">Т-11.45</text><text x="753" y="500">К-22.89</text><text x="753" y="517">Б-0.04</text>
                        <text x="983" y="479">У 2°45′</text><text x="983" y="496">R-730</text><text x="983" y="513">Т-17.36</text><text x="983" y="530">К-34.71</text><text x="983" y="547">Б-0.21</text>
                    </g>
                    <g class="picket">
                        <text transform="translate(502 622) rotate(-90)">ПК485+36.84</text><text transform="translate(518 622) rotate(-90)">отм. Уг 40.02</text>
                        <text transform="translate(747 675) rotate(-90)">ПК485+99.66</text><text transform="translate(762 675) rotate(-90)">отм. Уг 37.54</text>
                        <text transform="translate(977 705) rotate(-90)">ПК486+58.85</text><text transform="translate(992 705) rotate(-90)">отм. Уг 36.02</text>
                    </g>
                    <text class="gv" x="1058" y="567">ГВ 42.32</text>
                    <path d="M1192 676.500h103" stroke="#fff" />
                    <text class="casing" x="1192" y="674">Кожух 720.00 x 10.00</text>

                    <!-- Borehole labels -->
                    <path d="M587 736h34v12h-34zM1375 746h33v12h-33z" fill="#2b2c2e" />
                    <path d="M480 702.500h31M586 734.500h33M934 790.500h35M1373 744.500h35M1790 716.500h35" stroke="#bbb" />
                    <g class="bore">
                        <text x="495" y="701">бур.007</text><text x="496" y="715">42.94</text>
                        <text x="603" y="733">бур.1651</text><text x="603" y="747">41.24</text>
                        <text x="952" y="789">бур.1652</text><text x="953" y="803">38.36</text>
                        <text x="1391" y="743">бур.1653</text><text x="1391" y="756">40.89</text>
                        <text x="1808" y="715">бур.1654</text><text x="1808" y="729">42.13</text>
                        <text x="513" y="732">0.1</text><text x="513" y="742">0.5</text><text x="621" y="801">2.1</text><text x="620" y="937">9.0</text>
                        <text x="968" y="842">1.2</text><text x="969" y="954">7.0</text><text x="1408" y="805">1.7</text><text x="1408" y="840">3.5</text><text x="1826" y="797">2.7</text><text x="1826" y="832">4.5</text>
                    </g>
                    <text class="clipped" x="470" y="731">2.851</text>
                    <path d="M468 733.500h26" stroke="#fff" />
                </svg>
                <div class="view-bar">
                    <button>+</button><button>Сверху</button><button>2D-каркас</button><button>--- нет связанных видов ---</button>
                </div>
                <div class="compass">
                    <svg width="162" height="162" viewBox="0 0 162 162" fill="none" stroke="#777"><circle cx="81" cy="81" r="80" /><circle cx="81" cy="81" r="53" /><path d="M81.500 1v160M1 81.500h160" /><circle cx="81" cy="81" r="5" fill="#8a6b52" stroke="#7a5236" /></svg>
                    <button>Сверху</button>
                </div>

                <!-- Dialog -->
                <form class="dialog" role="dialog" aria-labelledby="dlgTitle" onsubmit="return false">
                    <div class="dialog-title"><span id="dlgTitle">Определение расчетных уровней воды</span><button type="button" aria-label="Закрыть"><svg width="12" height="12"><path d="M1 1l10 10M11 1L1 11" stroke="#222" /></svg></button></div>
                    <div class="dialog-body">
                        <div class="top">
                            <div class="table-box">
                                <table>
                                    <thead><tr><th>Участок</th><th>Нача...</th><th>Коне...</th></tr></thead>
                                    <tbody>
                                        <tr class="current"><td>Русло</td><td>537</td><td>892</td></tr>
                                        <tr><td></td><td></td><td></td></tr><tr><td></td><td></td><td></td></tr><tr><td></td><td></td><td></td></tr>
                                        <tr><td></td><td></td><td></td></tr><tr><td></td><td></td><td></td></tr><tr><td></td><td></td><td></td></tr><tr><td></td><td></td><td></td></tr>
                                    </tbody>
                                </table>
                            </div>
                            <div class="speed">
                                <div class="legend">Скорость течения. Русло (355м)</div>
                                <label class="check"><input type="checkbox">Для каждого расчетного уровня</label>
                                <label class="check"><input type="checkbox">Задается пользователем, м/с:</label>
                                <hr>
                                <div class="field"><label for="method">Метод расчета:</label><div class="select wide"><select id="method"><option>по Маннингу (Y=1/6)</option></select></div></div>
                                <div class="field"><label for="slope">Уклон водной поверхности (I), %о:</label><input id="slope" type="text" value="0"></div>
                                <div class="field"><button type="button" class="rough">Коэффициент шероховатости (n)</button><label for="rough">:</label><input id="rough" type="text" value="0.000"></div>
                            </div>
                        </div>
                        <hr>
                        <div class="middle">
                            <button type="button" class="sq" aria-label="Добавить"><svg viewBox="0 0 16 16"><path d="M9 3v12M3 9h12" stroke="#777" stroke-width="3" /><path d="M8 1v13M1 8h13" stroke="#fff" stroke-width="4" /><path d="M8 2v12M2 8h12" stroke="red" stroke-width="2" /></svg></button>
                            <button type="button" class="sq" aria-label="Обновить"><svg viewBox="0 0 16 16"><path d="M3 5q2-4 6-3t4 5-5 5M10 9l-4 3 5 3" stroke="#fff" stroke-width="4" fill="none" /><path d="M3 5q2-4 6-3t4 5-5 5M10 9l-4 3 5 3" stroke="#088" stroke-width="2" fill="none" /></svg></button>
                            <button type="button" class="sq" aria-label="Удалить" disabled><svg><use href="#i-cross" /></svg></button>
                            <button type="button" class="btn pre">Предв. расчет</button>
                            <div class="field"><label for="step">Шаг расчета по уровню, м:</label><input id="step" type="text" value="0.2"></div>
                        </div>
                        <hr>
                        <div class="bottom">
                            <div class="flow">
                                <div class="line"><label for="prob">Обеспечен. (P,%):</label><div class="select dark"><select id="prob"><option></option></select></div></div>
                                <div class="line"><label for="rate">Расход (Q, м куб/с):</label><input id="rate" type="text" value="0">
                                    <button type="button" class="sq" aria-label="Принять"><svg viewBox="0 0 16 16"><path d="M4 10l4 4 6-12" stroke="#888" stroke-width="4" fill="none" /><path d="M2 9l4 4 6-11" stroke="#fff" stroke-width="4" fill="none" /><path d="M2 8l4 4 6-10" stroke="red" stroke-width="3" fill="none" /></svg></button>
                                    <button type="button" class="sq" aria-label="Удалить расход" disabled><svg><use href="#i-cross" /></svg></button></div>
                            </div>
                            <div class="result"><div class="head">1</div><div>0</div></div>
                        </div>
                        <hr>
                        <div class="buttons">
                            <button type="button" class="btn">Расчет</button><button type="button" class="btn">Показать</button>
                            <button type="button" class="btn ok">OK</button><button type="button" class="btn cancel">Отмена</button>
                        </div>
                    </div>
                </form>
            </div>
            <div class="layouts">
                <svg width="15" height="15" viewBox="0 0 15 15"><path d="M.5.500h14v14H.5zM0 10.500h15" fill="none" stroke="#ddd" /><path d="M1 4h13v4H1z" fill="#6ea3e6" /></svg>
                <div class="tabs"><button class="active">Модель</button><button>Layout1</button><button>Layout2</button></div>
            </div>
        </section>
    </main>

    <!-- Command line -->
    <section class="command">
        <div class="command-side"><svg width="9" height="9"><use href="#i-x" /></svg><svg width="10" height="10"><use href="#i-pin" /></svg><span>Коман</span></div>
        <div class="command-body">
            <div class="log"><div>Расчет возможного размыва русла</div><div>*Отмена*</div><div>*Отмена*</div><div>Определение расчетных уровней воды</div></div>
            <div class="prompt"><label for="cmd">Команда:</label><input id="cmd" type="text"></div>
        </div>
    </section>

    <!-- Status bar -->
    <footer class="status">
        <span class="coords">203053.2903,770011.9660,0.0000</span>
        <button>ШАГ</button><button class="on">СЕТКА</button><button class="on">оПРИВЯЗКА</button><button class="on">3D оПРИВЯЗКА</button><button class="on">ОТС-ОБЪЕКТ</button><button class="on">ОТС-ПОЛЯР</button><button>ОРТО</button><button class="on">ДИН-ВВОД</button><button class="iso">ИЗО</button><button>ВЕС</button><button class="on">ШТРИХОВКА</button>
        <div class="status-right">
            <button class="model">МОДЕЛЬ</button>
            <span class="ic w22"><svg viewBox="0 0 16 16"><path d="M8 8V5q0-3 3-3t3 3v2M2 12V9q0-2 2-2t2 2" fill="none" stroke="#ccc" /><path d="M9 6h6v4H9zM1 10h7v5H1z" fill="#bbb" /></svg></span>
            <span class="ic doc"><svg viewBox="0 0 16 16"><path d="M1 1h12v12H1z" fill="#e8e8e8" /><path d="M7 10h9l-4 5z" fill="#444" stroke="#eee" /></svg></span>
            <span class="ic w22"><svg viewBox="0 0 16 16"><circle cx="4" cy="4" r="3.500" fill="#f5e9b0" /><path d="M3 8h3v4H3z" fill="#aaa" /><path d="M9 1h6v6M2 14h5" stroke="#aaa" stroke-dasharray="2 1" fill="none" /><path d="M10 6v9l2-2 2 3v-4h2z" fill="#fff" /></svg></span>
            <span class="ic w25"><svg viewBox="0 0 16 16"><circle cx="8" cy="6" r="5" fill="#ccc" /><path d="M6 11h4v4H6z" fill="#999" /></svg></span>
            <span class="ic on"><svg viewBox="0 0 16 16"><path d="M7 3v9l2-2 2 3v-4h2z" fill="#fff" /><circle cx="8" cy="8" r="7" fill="none" stroke="#e33" stroke-width="1.500" /><path d="M13 3L3 13" stroke="#e33" stroke-width="1.500" /></svg></span>
            <span class="ic on"><svg viewBox="0 0 16 16"><path d="M2 0v11l3-3 2 4 1-5h2z" fill="#fff" /><path d="M8 8h7v7H8z" fill="#fff" /><path d="M9 10h5M9 13h5" stroke="#444" /></svg></span>
            <span class="ic on"><svg viewBox="0 0 16 16"><path d="M2 15V2M2 14h13M1 4l1-3 1 3M12 13l3 1-3 1M3 13l5-4" stroke="#ddd" fill="none" /><path d="M13 1l-3 5h2l-1 4 4-6h-2z" fill="#ddd" /></svg></span>
            <span class="scale">m1:1</span>
            <span class="ic"><svg viewBox="0 0 16 16"><path d="M5 15L1 9l1-1 2 2V3h2v4l1-6h2v6l1-5h2v6l1-4h2l-1 7-2 4z" fill="#f2f2f2" /></svg></span>
            <span class="ic"><svg><use href="#i-glass" /></svg></span>
            <span class="ic"><svg viewBox="0 0 16 16"><path d="M0 0h16v16H0z" fill="#6ea8f0" /><circle cx="8" cy="6" r="4" fill="none" stroke="#235" stroke-width="1.500" /><path d="M11 9l4 5" stroke="#235" stroke-width="2" /></svg></span>
            <span class="ic"><svg viewBox="0 0 16 16"><path d="M7 14H1V1h11v4" fill="none" stroke="#6ea8f0" stroke-width="1.500" /><circle cx="9" cy="8" r="3" fill="none" stroke="#ddd" /><path d="M11 10l4 5" stroke="#ddd" stroke-width="1.500" /></svg></span>
            <span class="ic"><svg viewBox="0 0 16 16"><ellipse cx="8" cy="9" rx="7" ry="4" fill="none" stroke="#bbb" /><path d="M8 0v16M5 13l3 2" stroke="#ccc" /></svg></span>
            <span class="ic"><svg viewBox="0 0 16 16"><circle cx="8" cy="8" r="5" fill="none" stroke="#8bd14a" stroke-width="2.500" /><path d="M1 7l3 4 2-4zM15 9l-3-4-2 4z" fill="#8bd14a" /></svg></span>
            <span class="ic w22"><svg viewBox="0 0 16 16"><path d="M7 11H1V1h12v5M1 3h12" fill="none" stroke="#bbb" stroke-width="1.500" /><path d="M8 9h7v6H8z" fill="#ccc" /><path d="M10 9V6h3v3" stroke="#ccc" fill="none" /></svg></span>
            <span class="ic w25"><svg viewBox="0 0 16 16"><path d="M6 1H1v10h4M10 1h4v4M7 7l7-6" fill="none" stroke="#ddd" stroke-width="1.500" /><path d="M7 6h9v10H7z" fill="#e74c3c" /><path d="M11.500 8v4M11.500 13v2" stroke="#fff" stroke-width="1.500" /></svg></span>
            <span class="ic w25"><svg viewBox="0 0 16 16"><path d="M1 4V1h3M12 1h3v3M15 12v3h-3M4 15H1v-3" fill="none" stroke="#ddd" /><path d="M3 4h10v8H3z" fill="#17a5ea" stroke="#9cf" /></svg></span>
        </div>
    </footer>
</body>
</html>
```
FILE: styles.css
```
* {
    box-sizing: border-box;
}
body {
    margin: 0;
    height: 100vh;
    display: flex;
    flex-direction: column;
    overflow: hidden;
    background: #4a4a4a;
    color: #e8e8e8;
    font-family: "DejaVu Sans Condensed", "Noto Sans", sans-serif;
    font-size: 11px;
    border-bottom: 1px solid #e8edf2;
}
button, input, select {
    font: inherit;
    color: inherit;
    margin: 0;
    padding: 0;
    border: none;
    background: none;
    border-radius: 0;
}
button {
    white-space: nowrap;
}
svg {
    display: block;
    flex: none;
}
.defs {
    position: absolute;
    width: 0;
    height: 0;
}

/* Header */
.header {
    display: grid;
    grid-template-columns: 43px 1fr;
    grid-template-rows: 32px 21px;
    font-family: Roboto, sans-serif;
    font-size: 12px;
}
.logo {
    grid-row: span 2;
    padding: 14px 0 0 8px;
    background: linear-gradient(#fff 8px, #4a4a4a 8px);
}
.titlebar {
    display: flex;
    align-items: flex-end;
    background: #fff linear-gradient(#0078d7, #0078d7) 532px 0 / 77px 1px no-repeat;
}
.quick {
    display: flex;
    align-items: center;
    gap: 8px;
    width: 216px;
    height: 25px;
    padding: 0 0 0 7px;
    background: #4a4a4a;
}
.quick .more {
    margin-left: auto;
}
.title {
    flex: 1;
    align-self: center;
    padding-top: 5px;
    text-align: center;
    color: #111;
}
.help {
    display: flex;
    align-items: center;
    gap: 11px;
    width: 76px;
    height: 25px;
    padding-left: 6px;
    background: #4a4a4a;
}
.layout-btn {
    padding: 1px;
    border: 1px solid #4a90e2;
    background: #506a8a;
}
.question {
    font-size: 14px;
}
.window-buttons {
    display: flex;
    align-self: stretch;
    width: 145px;
    padding-right: 8px;
}
.window-buttons button {
    flex: 1;
    display: flex;
    align-items: center;
    justify-content: center;
}
.menu {
    display: flex;
    align-items: flex-end;
    padding-left: 2px;
}
.menu button {
    height: 18px;
    padding: 0 13px;
}
.menu .active {
    background: #7c7c7c;
    color: #fff;
}

/* Ribbon */
.ribbon {
    display: flex;
    gap: 3px;
    height: 100px;
    padding: 2px 3px;
    background: #5c5c5c;
    border: 1px solid #9a9a9a;
    border-left: none;
}
.group {
    display: flex;
    flex-direction: column;
    border: 1px solid #3f3f3f;
    border-top-color: #7e7e7e;
    border-left-color: #7e7e7e;
}
.g-common { width: 337px; }
.g-create { width: 407px; }
.g-relief { width: 412px; }
.g-marks { width: 230px; }
.g-write { width: 191px; }
.tools {
    flex: 1;
    display: grid;
    grid-template-columns: 1fr;
    padding: 0 5px;
}
.g-common .tools { grid-template-columns: 155px 1fr; padding-left: 6px; }
.g-create .tools { grid-template-columns: 190px 1fr; }
.g-relief .tools { grid-template-columns: 223px 1fr; }
.col {
    display: flex;
    flex-direction: column;
    gap: 8px;
    padding-top: 3px;
}
.col button {
    display: flex;
    align-items: center;
    gap: 3px;
    height: 16px;
}
.col svg {
    width: 16px;
    height: 16px;
}
.mid {
    justify-content: center;
    padding: 0;
}
.caption {
    height: 15px;
    line-height: 16px;
    text-align: center;
    color: #ccc;
    background: #6a6a6a;
}

/* Main */
.main {
    flex: 1;
    display: flex;
    gap: 5px;
    min-height: 0;
    padding: 1px 2px 5px 0;
}
.panel {
    position: relative;
    display: grid;
    grid-template-columns: 441px 21px;
    grid-template-rows: 20px minmax(0, 1fr);
}
.panel-title {
    grid-column: span 2;
    display: flex;
    align-items: center;
    gap: 7px;
    padding: 0 6px 0 4px;
    background: #a0a0a0;
    color: #fff;
}
.panel-title span {
    flex: 1;
}
.panel-body {
    display: flex;
    flex-direction: column;
    gap: 4px;
    min-height: 0;
    background: #f0f0f0;
}
.tree-box {
    flex: 1;
    display: flex;
    min-height: 0;
    overflow: hidden;
    padding: 2px 1px 0 12px;
    background: #fff;
    color: #000;
    border: 1px solid #828790;
}
.preview {
    height: 158px;
    border: 1px solid #a0a0a0;
}
.tree {
    flex: 1;
}
.tree, .tree ul {
    list-style: none;
    margin: 0;
    padding: 0;
}
.tree ul {
    margin-left: 27px;
}
.tree li {
    position: relative;
}
.tree ul > li::before {
    content: "";
    position: absolute;
    left: 4px;
    top: 0;
    bottom: 0;
    border-left: 1px dotted #777;
}
.tree ul > li:last-child:not(.open-end)::before {
    bottom: auto;
    height: 9px;
}
.row {
    position: relative;
    display: flex;
    align-items: center;
    gap: 11px;
    height: 18px;
    padding-left: 19px;
    white-space: nowrap;
}
.row::before {
    content: "";
    position: absolute;
    left: 4px;
    top: 9px;
    width: 15px;
    border-top: 1px dotted #777;
}
.row svg {
    width: 16px;
    height: 16px;
}
.row span {
    padding: 1px;
}
.row .selected {
    background: #0078d7;
    color: #fff;
    outline: 1px dotted #d08030;
}
.row i {
    width: 7px;
    height: 8px;
    margin: 0 -8px 0 -10px;
    border: 1px solid red;
    border-radius: 4px;
    color: red;
    font: bold 7px/6px "Liberation Sans", sans-serif;
    text-align: center;
}
.exp {
    position: absolute;
    left: 0;
    top: 5px;
    width: 9px;
    height: 9px;
    border: 1px solid #919191;
    background: linear-gradient(#3355aa, #3355aa) center / 5px 1px no-repeat #fff;
}
.exp.plus {
    background: linear-gradient(#3355aa, #3355aa) center / 5px 1px no-repeat, linear-gradient(#3355aa, #3355aa) center / 1px 5px no-repeat, #fff;
}
.scroll {
    width: 16px;
    padding: 16px 7px 64px;
    background: #f0f0f0;
}
.thumb {
    height: 100%;
    background: #8a8a8a;
}
.side-tabs {
    display: flex;
    flex-direction: column;
}
.side-tabs button {
    height: 120px;
    writing-mode: vertical-rl;
    transform: rotate(180deg);
    color: #aaa;
}
.side-tabs .active {
    background: #7c7c7c;
    color: #eee;
}
.context-menu {
    position: absolute;
    left: 245px;
    top: 247px;
    width: 313px;
    padding: 3px 5px 4px;
    border-radius: 5px;
    background: #f9f9f9;
    color: #000;
    font-family: Roboto, sans-serif;
    font-size: 12px;
    box-shadow: 0 3px 8px rgba(0, 0, 0, 0.35);
    z-index: 2;
}
.context-menu button {
    display: block;
    width: 100%;
    height: 22px;
    padding-left: 32px;
    border-radius: 4px;
    text-align: left;
}
.context-menu .hover {
    background: #f0f0f0;
}
.context-menu hr {
    margin: 4px 2px;
    border: none;
    border-top: 1px solid #d5d5d5;
}

/* Document */
.document {
    flex: 1;
    display: flex;
    flex-direction: column;
    min-width: 0;
    border: 1px solid #7c7c7c;
    border-top: none;
    border-bottom-width: 2px;
}
.doc-tabs {
    display: flex;
    align-items: center;
    justify-content: space-between;
    height: 21px;
    padding-right: 6px;
    border-bottom: 2px solid #7c7c7c;
    font-family: "Noto Sans", sans-serif;
}
.doc-tabs button {
    display: flex;
    align-items: center;
    gap: 16px;
    height: 18px;
    padding: 0 5px 0 23px;
    background: #7c7c7c;
    color: #fff;
}
.canvas {
    position: relative;
    flex: 1;
    min-height: 0;
    overflow: hidden;
    background: #2b2c2e;
}
.drawing {
    position: absolute;
    width: 100%;
    height: 100%;
}
.drawing text {
    fill: #fff;
    font-family: "Liberation Sans", sans-serif;
    font-size: 14px;
}
.drawing .picket text {
    font-family: Roboto, sans-serif;
}
.drawing .gv {
    fill: #00f;
    font-size: 13px;
    font-style: italic;
}
.drawing .casing {
    font-size: 11px;
    font-style: italic;
}
.drawing .bore text {
    fill: #ccc;
    font-size: 9px;
    font-style: italic;
    text-anchor: middle;
}
.drawing .clipped {
    font-size: 9px;
    font-style: italic;
}
.drawing .ucs {
    font-size: 16px;
}
.view-bar {
    position: absolute;
    left: 8px;
    top: 5px;
    display: flex;
    gap: 2px;
}
.view-bar button, .compass button {
    height: 17px;
    padding: 0 10px;
    border-radius: 3px;
    background: #484a4a;
    color: #929292;
}
.compass {
    position: absolute;
    top: 16px;
    right: 16px;
    display: flex;
    flex-direction: column;
    align-items: center;
}

/* Dialog */
.dialog {
    position: absolute;
    top: 60px;
    right: 251px;
    width: 504px;
    border-radius: 7px;
    background: #f0f0f0;
    color: #000;
    overflow: hidden;
}
.dialog-title {
    display: flex;
    align-items: center;
    justify-content: space-between;
    height: 30px;
    padding: 0 9px;
    background: linear-gradient(90deg, #f5f0f6, #eff3fb);
    font-family: Roboto, sans-serif;
    font-size: 12px;
}
.dialog-body {
    padding: 7px 10px 11px 6px;
}
.dialog hr {
    margin: 7px 3px 8px 2px;
    border: none;
    border-top: 1px solid #a0a0a0;
    border-bottom: 1px solid #fff;
}
.top {
    display: flex;
    gap: 5px;
}
.table-box {
    width: 222px;
    height: 156px;
    padding: 1px;
    border: 1px solid #828790;
    background: #fff;
    overflow: hidden;
}
.table-box table {
    width: 100%;
    table-layout: fixed;
    border-collapse: collapse;
}
.table-box th {
    height: 25px;
    padding: 0 0 0 7px;
    font-weight: normal;
    text-align: left;
    border-right: 1px solid #e5e5e5;
}
.table-box th:first-child {
    width: 109px;
}
.table-box td {
    height: 17px;
    padding: 0;
    text-align: center;
    border: 1px solid #ececec;
    border-left: none;
}
.table-box td:first-child {
    padding-left: 5px;
    text-align: left;
}
.current {
    background: #f0f0f0;
}
.speed {
    flex: 1;
}
.legend {
    height: 18px;
    line-height: 19px;
    border-bottom: 1px solid #a0a0a0;
}
.speed .check {
    display: flex;
    align-items: center;
    gap: 3px;
    height: 16px;
    margin: 8px 0 0 7px;
}
.check input {
    appearance: none;
    width: 13px;
    height: 13px;
    border: 1px solid #666;
    border-radius: 3px;
    background: #f7f7f7;
}
.speed hr {
    margin: 8px 10px 6px 7px;
}
.field {
    display: flex;
    align-items: center;
    justify-content: space-between;
    flex: 1;
    padding: 0 7px;
}
.speed .field + .field {
    margin-top: 4px;
}
.dialog input[type="text"] {
    width: 43px;
    height: 20px;
    padding-left: 5px;
    background: #fff;
    border-bottom: 1px solid #868686;
}
.select {
    position: relative;
    width: 105px;
}
.select.wide {
    width: 158px;
}
.select select {
    appearance: none;
    width: 100%;
    height: 21px;
    padding-left: 3px;
    background: #fdfdfd;
    border: 1px solid #ccc;
    border-radius: 2px;
}
.select.dark select {
    border-color: #777;
}
.select::after {
    content: "";
    position: absolute;
    right: 6px;
    top: 6px;
    width: 5px;
    height: 5px;
    border: solid #555;
    border-width: 0 1px 1px 0;
    transform: rotate(45deg);
}
.rough {
    height: 18px;
    width: 183px;
    margin-left: -3px;
    border: 1px solid #ccc;
    border-radius: 3px;
    background: #f8f8f8;
}
.rough + label {
    flex: 1;
    padding-left: 3px;
}
.middle {
    display: flex;
    align-items: center;
    gap: 14px;
    padding: 0 0 5px 2px;
}
.middle .pre {
    width: 103px;
    margin-left: 7px;
}
.middle .field {
    padding-right: 7px;
    padding-left: 0;
}
.sq {
    width: 22px;
    height: 22px;
    padding: 2px;
    border: 1px solid #000;
    background: #c0c0c0;
}
.sq:disabled {
    border-color: #808080;
}
.sq svg {
    width: 16px;
    height: 16px;
}
.dialog .middle + hr {
    margin-bottom: 3px;
}
.bottom {
    display: flex;
    justify-content: space-between;
    padding-left: 2px;
}
.flow {
    width: 210px;
}
.line {
    display: flex;
    align-items: center;
    justify-content: space-between;
}
.line + .line {
    margin-top: 12px;
}
.line label {
    width: 103px;
    white-space: nowrap;
}
.result {
    width: 270px;
    height: 58px;
    border-top: 1px solid #828790;
    border-left: 1px solid #828790;
    background: #fff;
    padding-left: 7px;
    line-height: 17px;
}
.result .head {
    width: 46px;
    height: 25px;
    line-height: 26px;
    border-right: 1px solid #ddd;
}
.buttons {
    display: flex;
    gap: 9px;
    padding-left: 3px;
}
.btn {
    width: 81px;
    height: 22px;
    border: 1px solid #ccc;
    border-radius: 4px;
    background: #fdfdfd;
}
.btn.ok {
    width: 73px;
    margin-left: auto;
    border-color: #0067c0;
    outline: 1px dotted #000;
    outline-offset: -3px;
}
.btn.cancel {
    width: 73px;
}

.layouts {
    display: flex;
    align-items: center;
    gap: 18px;
    height: 23px;
    padding: 0 0 3px 3px;
    border-top: 2px solid #7c7c7c;
    font-family: Roboto, sans-serif;
    font-size: 12px;
}
.tabs {
    display: flex;
}
.tabs button {
    width: 55px;
    height: 18px;
    border: 1px solid #7c7c7c;
    border-top: none;
    color: #bbb;
}
.tabs .active {
    width: 58px;
    background: #7c7c7c;
    color: #fff;
}

/* Command line */
.command {
    display: flex;
    height: 69px;
    background: #5c5c5c;
}
.command-side {
    display: flex;
    flex-direction: column;
    align-items: center;
    gap: 6px;
    width: 18px;
    padding-top: 4px;
    background: #7c7c7c;
}
.command-side span {
    writing-mode: vertical-rl;
    transform: rotate(180deg);
    font-size: 10px;
    color: #ccc;
}
.command-body {
    flex: 1;
    display: flex;
    flex-direction: column;
    font: 12px "Liberation Mono", monospace;
}
.log {
    display: flex;
    flex-direction: column;
    justify-content: flex-end;
    height: 52px;
    margin-top: 2px;
    padding: 0 0 0 3px;
    line-height: 14px;
    overflow: hidden;
    border-bottom: 2px solid #505050;
}
.prompt {
    display: flex;
    padding-left: 3px;
    line-height: 16px;
}
.prompt input {
    flex: 1;
}

/* Status bar */
.status {
    display: flex;
    align-items: center;
    height: 25px;
    font-family: Roboto, sans-serif;
    font-size: 11px;
    color: #fff;
}
.coords {
    width: 180px;
    padding-left: 3px;
    border-right: 1px solid #5c5c5c;
}
.status button {
    height: 21px;
    padding: 0 8px;
}
.status .on {
    background: #4f6a8c;
    border: 1px solid #4a90e2;
}
.status .iso {
    margin-right: 5px;
    border-right: 1px solid #777;
}
.status-right {
    display: flex;
    align-items: center;
    margin-left: auto;
}
.status .model {
    padding: 0;
    font-size: 12px;
}
.ic {
    display: flex;
    align-items: center;
    justify-content: center;
    width: 29px;
    height: 20px;
    border-left: 1px solid #5f5f5f;
}
.ic svg {
    width: 16px;
    height: 16px;
}
.ic.doc {
    width: 108px;
    justify-content: flex-start;
    padding-left: 2px;
}
.w22 { width: 22px; }
.w25 { width: 25px; }
.scale {
    width: 90px;
    text-align: center;
    font-size: 12px;
}
```
